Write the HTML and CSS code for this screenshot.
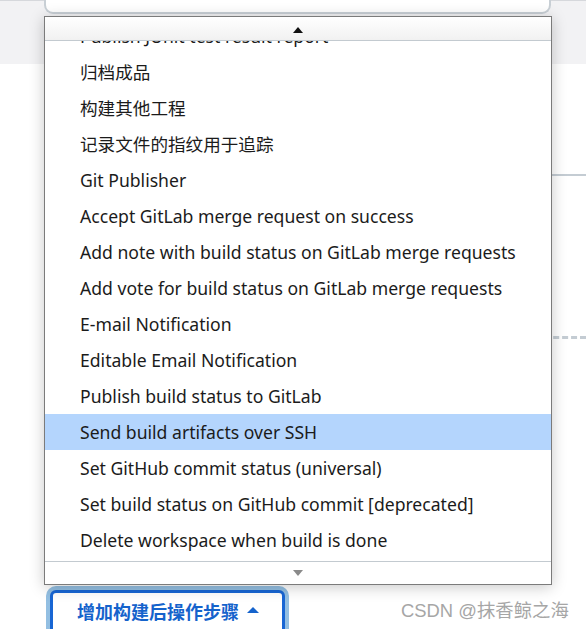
FILE: index.html
```html
<!DOCTYPE html>
<html lang="zh">
<head>
<meta charset="utf-8">
<link rel="stylesheet" href="styles.css">
</head>
<body>
<div class="page">
  <div class="topband">
    <div class="card"></div>
  </div>
  <div class="content">
    <div class="section-line"></div>
    <div class="dashed-line"></div>
    <div class="footer">
      <button class="add-btn">增加构建后操作步骤<span class="caret"></span></button>
      <span class="watermark">CSDN @抹香鲸之海</span>
    </div>
  </div>

  <div class="menu">
    <div class="scroll-up"><span class="tri-up"></span></div>
    <div class="viewport">
      <ul class="items">
        <li>Publish JUnit test result report</li>
        <li>归档成品</li>
        <li>构建其他工程</li>
        <li>记录文件的指纹用于追踪</li>
        <li>Git Publisher</li>
        <li>Accept GitLab merge request on success</li>
        <li>Add note with build status on GitLab merge requests</li>
        <li>Add vote for build status on GitLab merge requests</li>
        <li>E-mail Notification</li>
        <li>Editable Email Notification</li>
        <li>Publish build status to GitLab</li>
        <li class="active">Send build artifacts over SSH</li>
        <li>Set GitHub commit status (universal)</li>
        <li>Set build status on GitHub commit [deprecated]</li>
        <li>Delete workspace when build is done</li>
      </ul>
    </div>
    <div class="scroll-down"><span class="tri-down"></span></div>
  </div>
</div>
</body>
</html>
```

FILE: styles.css
```css
* { box-sizing: border-box; }
html, body { margin: 0; padding: 0; }
body {
  background: #ffffff;
  font-family: "Noto Sans", "Noto Sans CJK SC", sans-serif;
  width: 586px;
  height: 629px;
  overflow: hidden;
}
.page { position: relative; width: 586px; height: 629px; overflow: hidden; }

.topband {
  height: 64px;
  background: #f2f2f4;
  border-top: 1px solid #d6d8dc;
  padding-left: 44px;
  padding-right: 35px;
}
.card {
  height: 14px;
  margin-top: -1px;
  background: #fff;
  border: 2px solid #c8cfd5;
  border-top: none;
  border-radius: 0 0 9px 9px;
}

.content {
  padding-left: 44px;
}
.section-line {
  margin-top: 110px;
  height: 2px;
  background: #c4ccd3;
}
.dashed-line {
  margin-top: 160px;
  border-top: 3px dashed #c4ccd3;
}
.footer {
  margin-top: 246px;
  display: flex;
  align-items: flex-start;
}
.add-btn {
  margin: 5px 0 0 6px;
  width: 235px;
  height: 60px;
  border: 3px solid #1866d4;
  border-radius: 6px;
  box-shadow: 0 0 0 4px #93bfe2;
  background: #fff;
  color: #1563cc;
  font-family: "Noto Sans CJK SC", sans-serif;
  font-weight: 700;
  font-size: 18px;
  line-height: 24px;
  text-align: left;
  padding: 6px 0 0 24px;
  display: flex;
  align-items: center;
  align-content: flex-start;
  flex-wrap: wrap;
}
.caret {
  display: inline-block;
  width: 0; height: 0;
  border-left: 6px solid transparent;
  border-right: 6px solid transparent;
  border-bottom: 6px solid #1563cc;
  margin-left: 8px;
  margin-top: -2px;
}
.watermark {
  margin-left: 116px;
  margin-top: 14px;
  line-height: 24px;
  color: #a6a6a6;
  font-family: "Liberation Sans", "Noto Sans CJK SC", sans-serif;
  font-size: 18.4px;
  white-space: nowrap;
}

.menu {
  position: absolute;
  left: 44px;
  top: 16px;
  width: 508px;
  height: 569px;
  border: 1px solid #7b7b7b;
  background: #fff;
  box-shadow: 0 2px 14px rgba(0,0,0,0.22);
  display: flex;
  flex-direction: column;
}
.scroll-up {
  height: 24px;
  border-bottom: 1px solid #c3cad0;
  background: linear-gradient(#ffffff, #f1f1f1);
  display: flex;
  align-items: center;
  justify-content: center;
}
.tri-up {
  width: 0; height: 0;
  border-left: 5px solid transparent;
  border-right: 5px solid transparent;
  border-bottom: 6px solid #111;
  margin-top: 2px;
}
.viewport {
  height: 520px;
  overflow: hidden;
}
.items {
  list-style: none;
  margin: -23px 0 0 0;
  padding: 0;
}
.items li {
  height: 36px;
  line-height: 36px;
  padding-left: 35px;
  font-size: 17.6px;
  color: #1b1b1b;
  white-space: nowrap;
}
.items li.active { background: #b4d5fd; }
.scroll-down {
  flex: 1;
  border-top: 1px solid #c3cad0;
  display: flex;
  align-items: center;
  justify-content: center;
}
.tri-down {
  width: 0; height: 0;
  border-left: 5px solid transparent;
  border-right: 5px solid transparent;
  border-top: 6px solid #8a8a8a;
}
```
